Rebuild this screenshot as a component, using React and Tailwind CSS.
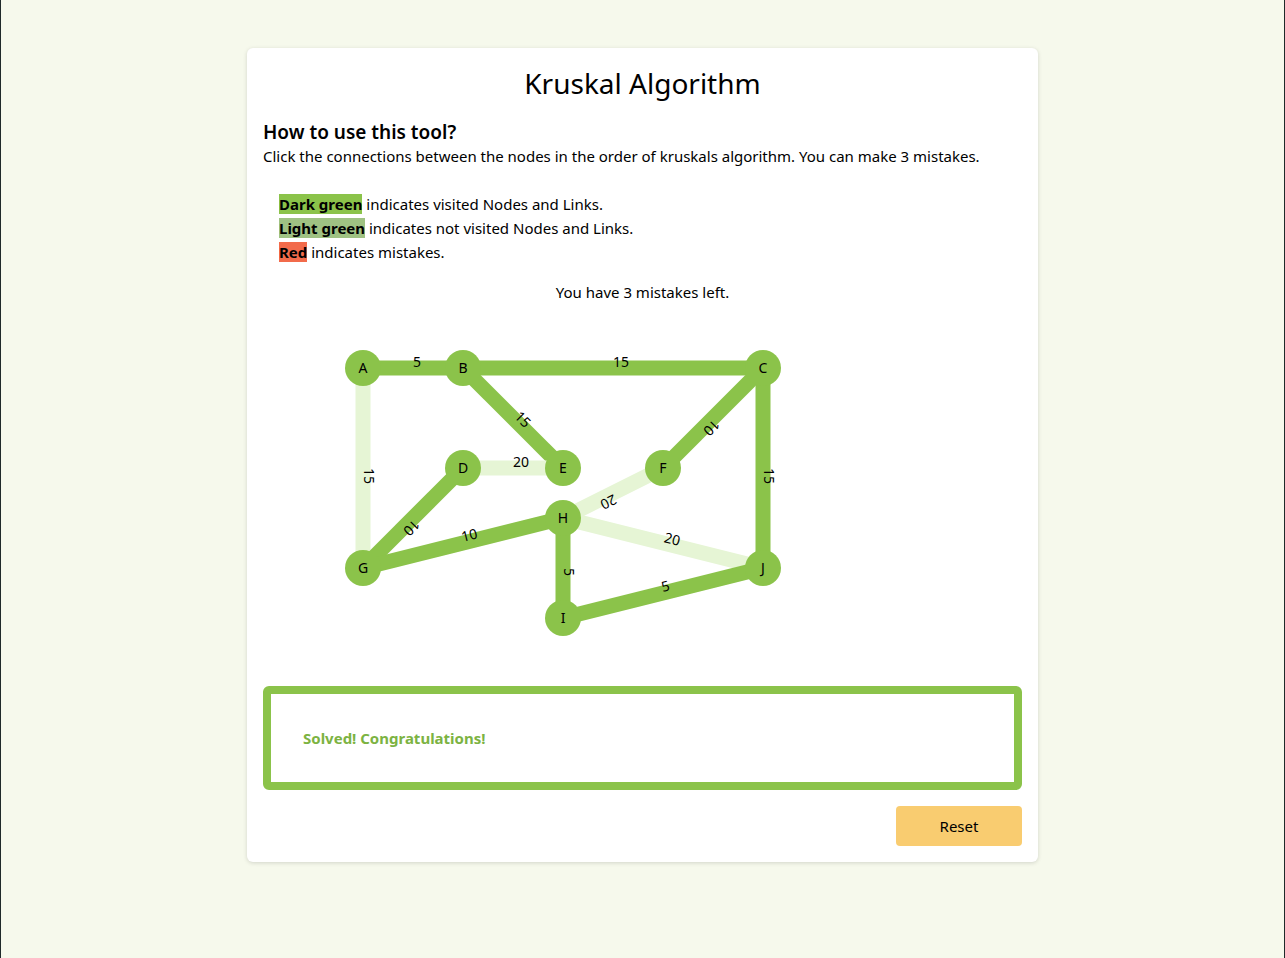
const nodes = {
  A: [363, 368],
  B: [463, 368],
  C: [763, 368],
  D: [463, 468],
  E: [563, 468],
  F: [663, 468],
  G: [363, 568],
  H: [563, 518],
  I: [563, 618],
  J: [763, 568],
};

// source -> target order decides how the weight label is rotated
const links = [
  { s: "A", t: "B", w: 5, visited: true },
  { s: "B", t: "C", w: 15, visited: true },
  { s: "A", t: "G", w: 15, visited: false },
  { s: "B", t: "E", w: 15, visited: true },
  { s: "D", t: "E", w: 20, visited: false },
  { s: "C", t: "F", w: 10, visited: true },
  { s: "C", t: "J", w: 15, visited: true },
  { s: "D", t: "G", w: 10, visited: true },
  { s: "G", t: "H", w: 10, visited: true },
  { s: "F", t: "H", w: 20, visited: false },
  { s: "H", t: "J", w: 20, visited: false },
  { s: "H", t: "I", w: 5, visited: true },
  { s: "I", t: "J", w: 5, visited: true },
];

const OX = 330;
const OY = 330;

function Graph() {
  return (
    <svg width="480" height="320" className="block">
      {links.map((l) => {
        const [x1, y1] = nodes[l.s];
        const [x2, y2] = nodes[l.t];
        return (
          <line
            key={l.s + l.t}
            x1={x1 - OX}
            y1={y1 - OY}
            x2={x2 - OX}
            y2={y2 - OY}
            stroke={l.visited ? "#8bc34a" : "#e6f5d5"}
            strokeWidth="15"
          />
        );
      })}
      {links.map((l) => {
        const [x1, y1] = nodes[l.s];
        const [x2, y2] = nodes[l.t];
        const mx = (x1 + x2) / 2 - OX;
        const my = (y1 + y2) / 2 - OY;
        const angle = (Math.atan2(y2 - y1, x2 - x1) * 180) / Math.PI;
        return (
          <text
            key={"w" + l.s + l.t}
            x={mx}
            y={my}
            dy="-1"
            fontSize="14"
            fill="#000"
            transform={`rotate(${angle} ${mx} ${my})`}
          >
            {l.w}
          </text>
        );
      })}
      {Object.entries(nodes).map(([name, [x, y]]) => (
        <g key={name}>
          <circle cx={x - OX} cy={y - OY} r="18" fill="#8bc34a" />
          <text
            x={x - OX}
            y={y - OY + 5}
            textAnchor="middle"
            fontSize="14"
            fill="#000"
          >
            {name}
          </text>
        </g>
      ))}
    </svg>
  );
}

export default function App() {
  return (
    <div
      className="min-h-[958px] bg-[#f6f9ec] border-x border-[#1f2a2a] pt-12 pb-24 text-black"
      style={{ fontFamily: '"Noto Sans", "Open Sans", sans-serif' }}
    >
      <div className="mx-auto w-[791px] rounded-md bg-white px-4 pt-4 pb-4 shadow-[0_1px_4px_rgba(0,0,0,0.15)]">
        <h1 className="text-center text-[28px] leading-[38px] font-normal">
          Kruskal Algorithm
        </h1>

        <h2 className="mt-[18px] text-[19px] leading-6 font-semibold">
          How to use this tool?
        </h2>
        <p className="text-[15px] leading-6">
          Click the connections between the nodes in the order of kruskals
          algorithm. You can make 3 mistakes.
        </p>

        <ul className="mt-6 pl-4 text-[15px] leading-6">
          <li>
            <span className="bg-[#8bc34a] font-bold">Dark green</span> indicates
            visited Nodes and Links.
          </li>
          <li>
            <span className="bg-[#9fc283] font-bold">Light green</span> indicates
            not visited Nodes and Links.
          </li>
          <li>
            <span className="bg-[#f26b4b] font-bold">Red</span> indicates
            mistakes.
          </li>
        </ul>

        <p className="mt-4 text-center text-[15px] leading-6">
          You have 3 mistakes left.
        </p>

        <div className="mt-[26px] pl-[67px]">
          <Graph />
        </div>

        <div className="mt-9 rounded-md border-8 border-[#8bc34a] px-8 py-8">
          <p className="text-[15px] leading-6 font-bold text-[#7cb342]">
            Solved! Congratulations!
          </p>
        </div>

        <div className="mt-4 flex justify-end">
          <button className="h-10 w-[126px] rounded-[4px] bg-[#f9cc70] text-[15px]">
            Reset
          </button>
        </div>
      </div>
    </div>
  );
}
